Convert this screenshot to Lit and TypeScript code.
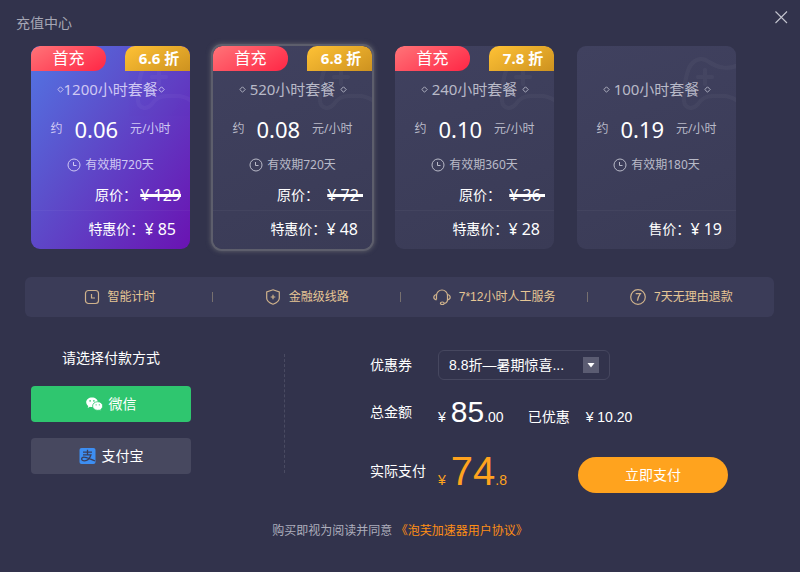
import { LitElement, html, css, svg, nothing } from "lit";
import { customElement, state } from "lit/decorators.js";
import { classMap } from "lit/directives/class-map.js";

interface Plan {
  title: string;
  rate: string;
  days: number;
  discount?: string;
  original?: string;
  saleLabel: string;
  sale: string;
}

const PLANS: Plan[] = [
  { title: "1200小时套餐", rate: "0.06", days: 720, discount: "6.6 折", original: "¥ 129", saleLabel: "特惠价：", sale: "¥ 85" },
  { title: "520小时套餐", rate: "0.08", days: 720, discount: "6.8 折", original: "¥ 72 ", saleLabel: "特惠价：", sale: "¥ 48" },
  { title: "240小时套餐", rate: "0.10", days: 360, discount: "7.8 折", original: "¥ 36 ", saleLabel: "特惠价：", sale: "¥ 28" },
  { title: "100小时套餐", rate: "0.19", days: 180, saleLabel: "售价：", sale: "¥ 19" },
];

const diamond = html`<svg class="diamond" viewBox="0 0 7 7" aria-hidden="true">
  <path d="M3.5 .8 6.2 3.5 3.5 6.2 .8 3.5Z" fill="none" stroke="currentColor" stroke-width=".9" />
</svg>`;

const clock = html`<svg class="clock" viewBox="0 0 14 14" aria-hidden="true">
  <circle cx="7" cy="7" r="6" fill="none" stroke="currentColor" />
  <path d="M6.5 4v3.5h3" fill="none" stroke="currentColor" />
</svg>`;

const gamepad = html`<svg class="gamepad" viewBox="0 0 56 60" aria-hidden="true">
  <path
    d="M58 13C49 18 38 16 29 10C21 4 13 8 9 16C5 26 3 42 4 49C5 57 13 58 18 52C22 46 26 44 33 44H44C49 44 53 46 58 49M25 18V32M18 25H32"
    fill="none" stroke="currentColor" stroke-width="4" stroke-linecap="round" />
</svg>`;

const BENEFITS = [
  {
    label: "智能计时",
    icon: svg`<rect x="1.5" y="1.5" width="13" height="13" rx="3" /><path d="M7.5 5v4h3.5" />`,
  },
  {
    label: "金融级线路",
    icon: svg`<path d="M8 .8 14.3 3v6.200c0 2.700-3.300 4.800-6.300 6-3-1.200-6.300-3.300-6.300-6V3Z" /><path d="M8 5.700v4.600M5.700 8h4.600" />`,
  },
  {
    label: "7*12小时人工服务",
    wide: true,
    icon: svg`<path d="M3.500 10.500V6.500a5.500 5.500 0 0 1 11 0v4c0 2-1.200 3.600-3.200 4" /><path d="M3.500 5.500C1.500 6 .8 7 .8 8.200s.7 2.200 2.700 2.700M14.500 5.500c2 .5 2.700 1.500 2.700 2.700s-.7 2.200-2.700 2.700" /><ellipse cx="9.300" cy="14.300" rx="1.900" ry="1.300" />`,
  },
  {
    label: "7天无理由退款",
    icon: svg`<circle cx="8" cy="8" r="7.300" /><path d="M5.700 4.700h4.700C8.800 6.800 7.800 9 7.500 11.700" />`,
  },
];

const wechat = html`<svg class="pay-icon" viewBox="0 0 17 16" aria-hidden="true">
  <path fill="#fff" d="M6 1.500C2.700 1.500.2 3.600.2 6.300c0 1.500.8 2.800 2.100 3.700l-.6 1.900 2.200-1.100c.7.200 1.300.3 2.100.3 3.300 0 5.900-2.100 5.900-4.800S9.300 1.500 6 1.500Z" />
  <path fill="#fff" stroke="#2fc66f" stroke-width=".8" d="M11.700 5.700c-2.900 0-5.100 1.900-5.100 4.300s2.200 4.300 5.100 4.300c.6 0 1.100-.1 1.600-.2l1.900 1-.5-1.700c1.200-.8 2-2 2-3.400 0-2.400-2.200-4.300-5-4.300Z" />
  <g fill="#2fc66f"><circle cx="4.100" cy="4.900" r=".8" /><circle cx="7.900" cy="4.900" r=".8" /><circle cx="10.100" cy="8.800" r=".6" /><circle cx="13.300" cy="8.800" r=".6" /></g>
</svg>`;

const alipay = html`<svg class="pay-icon" viewBox="0 0 16 16" aria-hidden="true">
  <rect width="16" height="16" rx="2" fill="#3d8ef2" />
  <g fill="none" stroke="#3b3f5c" stroke-width="1.300">
    <path d="M3.500 4.200h9M8 1.800v5M3.500 6.800h8C10.700 9.300 8.300 12.800 5 12.800c-3.800 0-3.600-3.600-.6-3.600 3 0 6.600 2.200 11 3.700" />
  </g>
</svg>`;

@customElement("app-root")
export class AppRoot extends LitElement {
  @state() private selected = 1;
  @state() private method = "wechat";

  static styles = css`
    :host {
      display: block;
      min-height: 100vh;
      box-sizing: border-box;
      background: #32334c;
      color: #fff;
      font: 14px/20px "Liberation Sans", "Noto Sans CJK SC", sans-serif;
    }
    button, select {
      font: inherit;
      color: inherit;
      border: 0;
      margin: 0;
      padding: 0;
      cursor: pointer;
    }
    .header {
      display: flex;
      justify-content: space-between;
      padding: 10px 12px 0 16px;
      height: 36px;
    }
    .header h1 {
      margin: 0;
      padding-top: 3px;
      font: inherit;
      color: #a5a6b4;
    }
    .close {
      width: 14px;
      height: 14px;
      background: none;
      color: #c3c4ce;
    }
    .close svg { display: block; width: 14px; height: 14px; }

    .plans {
      display: grid;
      grid-template-columns: repeat(4, 1fr);
      gap: 23px;
      padding: 0 64px 0 31px;
    }
    .card {
      position: relative;
      display: flex;
      flex-direction: column;
      border-radius: 9px;
      overflow: hidden;
      background: linear-gradient(160deg, #40415f, #3a3b56);
      color: #b9bac8;
      font: 12px/20px "Noto Sans", "Noto Sans CJK SC", sans-serif;
    }
    .card.featured {
      background: linear-gradient(125deg, #5275e3, #5c4fcb 40%, #6a13b2);
      color: #cfc8f3;
    }
    .card.selected { box-shadow: 0 0 0 2px #5d5e6c, 0 0 5px 2px #66676f; }
    .gamepad {
      position: absolute;
      top: 6px;
      right: 0;
      width: 56px;
      height: 60px;
      color: #fff;
      opacity: 0.03;
    }
    .tags {
      position: relative;
      display: flex;
      justify-content: space-between;
      height: 25px;
      line-height: 25px;
      color: #fff;
    }
    .first {
      width: 75px;
      border-radius: 9px 12px 12px 0;
      background: linear-gradient(150deg, #ff7478, #ff2645);
      font-size: 16px;
    }
    .discount {
      width: 65px;
      box-sizing: border-box;
      padding-left: 3px;
      border-radius: 10px 9px 0 0;
      background: linear-gradient(150deg, #ffc235, #cd9220);
      font-size: 15px;
      font-weight: 700;
    }
    .title {
      display: flex;
      justify-content: space-between;
      align-items: center;
      align-self: center;
      width: 108px;
      height: 36px;
      font-size: 15px;
      white-space: nowrap;
    }
    .diamond { width: 7px; height: 7px; flex: none; }
    .rate {
      display: flex;
      justify-content: center;
      align-items: center;
      gap: 12px;
      height: 43px;
    }
    .rate strong {
      font-size: 22px;
      font-weight: 400;
      color: #fff;
    }
    .validity {
      display: flex;
      justify-content: center;
      align-items: center;
      gap: 4px;
      height: 30px;
    }
    .clock { width: 14px; height: 14px; }
    .original {
      display: flex;
      justify-content: space-between;
      align-items: center;
      height: 30px;
      padding: 0 9px 0 64px;
      color: #fff;
      font-size: 14px;
    }
    .original s {
      font-size: 16px;
      white-space: pre;
      text-decoration-thickness: 3px;
    }
    .sale {
      display: flex;
      justify-content: flex-end;
      align-items: center;
      height: 39px;
      box-sizing: border-box;
      padding: 0 14px 3px 0;
      margin-top: auto;
      border-top: 1px solid rgba(255, 255, 255, 0.04);
      color: #fff;
      font-size: 14px;
    }
    .card:last-child .sale { margin-top: 30px; }
    .sale b { font-size: 16px; font-weight: 400; }

    .benefits {
      display: grid;
      grid-template-columns: repeat(4, 1fr);
      margin: 28px 26px 0 25px;
      padding: 0;
      list-style: none;
      border-radius: 6px;
      background: #3b3c58;
      color: #e6c695;
      font-size: 12px;
    }
    .benefits li {
      display: flex;
      align-items: center;
      justify-content: center;
      gap: 8px;
      height: 40px;
      padding-left: 2px;
      position: relative;
    }
    .benefits li + li::before {
      content: "";
      position: absolute;
      left: 0;
      top: 15px;
      width: 1px;
      height: 10px;
      background: #77706f;
    }
    .benefits svg {
      width: 16px;
      height: 16px;
      fill: none;
      stroke: #cfb28c;
      stroke-width: 1.2;
    }
    .benefits svg.wide { width: 18px; }

    .checkout {
      display: flex;
      padding: 31px 72px 0 31px;
    }
    .methods {
      display: flex;
      flex-direction: column;
      gap: 16px;
      width: 160px;
    }
    .methods h2 {
      margin: 0 0 2px;
      font: inherit;
      text-align: center;
    }
    .method {
      display: flex;
      align-items: center;
      justify-content: center;
      gap: 6px;
      height: 36px;
      border-radius: 4px;
      background: #47485f;
    }
    .method.wechat { background: #2fc66f; }
    .pay-icon { width: 17px; height: 16px; }
    .divider {
      margin: 6px 85px 20px 93px;
      border-left: 1px dashed #4a4b62;
    }
    .summary {
      flex: 1;
      padding-top: 2px;
    }
    .row { display: flex; }
    .row .name { width: 68px; flex: none; }
    .coupon { align-items: center; height: 30px; }
    .picker { display: grid; align-items: center; width: 172px; }
    .picker > * { grid-area: 1 / 1; }
    .picker select {
      appearance: none;
      height: 30px;
      padding: 0 40px 0 10px;
      border: 1px solid #46475f;
      border-radius: 6px;
      background: #32334c;
    }
    .caret {
      justify-self: end;
      margin-right: 11px;
      width: 16px;
      height: 16px;
      background: #5b5c72;
      pointer-events: none;
    }
    .total {
      align-items: center;
      height: 30px;
      margin-top: 17px;
    }
    .amount { white-space: pre; line-height: 30px; padding-top: 4px; }
    .amount .big { font-size: 30px; margin-left: 5px; }
    .saved { margin-left: 24px; }
    .saved-value { margin-left: 16px; }
    .payable {
      height: 40px;
      margin-top: 26px;
    }
    .payable .name { line-height: 36px; }
    .due { color: #ffa31e; line-height: 36px; }
    .due .big { font-size: 40px; margin-left: 5px; }
    .submit {
      align-self: flex-end;
      margin-left: auto;
      width: 150px;
      height: 36px;
      border-radius: 18px;
      background: #ffa31e;
    }
    .terms {
      margin: 28px 0 0;
      padding-bottom: 31px;
      text-align: center;
      font-size: 12px;
      color: #adaebc;
    }
    .terms a { color: #ff8e14; text-decoration: none; }
  `;

  private renderPlan(plan: Plan, index: number) {
    return html`<button
      class=${classMap({ card: true, featured: index === 0, selected: index === this.selected })}
      aria-pressed=${index === this.selected}
      @click=${() => (this.selected = index)}
    >
      ${gamepad}
      <span class="tags">
        ${plan.discount
          ? html`<span class="first">首充</span><span class="discount">${plan.discount}</span>`
          : nothing}
      </span>
      <span class="title">${diamond}<span>${plan.title}</span>${diamond}</span>
      <span class="rate"><span>约</span><strong>${plan.rate}</strong><span>元/小时</span></span>
      <span class="validity">${clock}<span>有效期${plan.days}天</span></span>
      ${plan.original
        ? html`<span class="original"><span>原价：</span><s>${plan.original}</s></span>`
        : nothing}
      <span class="sale"><span>${plan.saleLabel}</span><b>${plan.sale}</b></span>
    </button>`;
  }

  render() {
    return html`
      <header class="header">
        <h1>充值中心</h1>
        <button class="close" aria-label="关闭">
          <svg viewBox="0 0 14 14"><path d="M1.500 1.500 13 13M13 1.500 1.500 13" stroke="currentColor" stroke-width="1.100" /></svg>
        </button>
      </header>
      <section class="plans">${PLANS.map((p, i) => this.renderPlan(p, i))}</section>
      <ul class="benefits">
        ${BENEFITS.map(
          (b) => html`<li>
            <svg class=${b.wide ? "wide" : ""} viewBox=${b.wide ? "0 0 18 16" : "0 0 16 16"} aria-hidden="true">${b.icon}</svg>
            <span>${b.label}</span>
          </li>`
        )}
      </ul>
      <section class="checkout">
        <div class="methods">
          <h2>请选择付款方式</h2>
          <button class="method wechat" aria-pressed=${this.method === "wechat"} @click=${() => (this.method = "wechat")}>
            ${wechat}<span>微信</span>
          </button>
          <button class="method" aria-pressed=${this.method === "alipay"} @click=${() => (this.method = "alipay")}>
            ${alipay}<span>支付宝</span>
          </button>
        </div>
        <div class="divider"></div>
        <div class="summary">
          <div class="row coupon">
            <label class="name" for="coupon">优惠券</label>
            <div class="picker">
              <select id="coupon"><option>8.8折—暑期惊喜...</option></select>
              <svg class="caret" viewBox="0 0 16 16" aria-hidden="true"><path d="M4.500 6h7L8 10.500Z" fill="#fff" /></svg>
            </div>
          </div>
          <div class="row total">
            <span class="name">总金额</span>
            <span class="amount">¥<span class="big">85</span>.00<span class="saved">已优惠</span><span class="saved-value">¥ 10.20</span></span>
          </div>
          <div class="row payable">
            <span class="name">实际支付</span>
            <span class="due">¥<span class="big">74</span>.8</span>
            <button class="submit">立即支付</button>
          </div>
        </div>
      </section>
      <p class="terms">购买即视为阅读并同意 <a href="#terms">《泡芙加速器用户协议》</a></p>
    `;
  }
}
